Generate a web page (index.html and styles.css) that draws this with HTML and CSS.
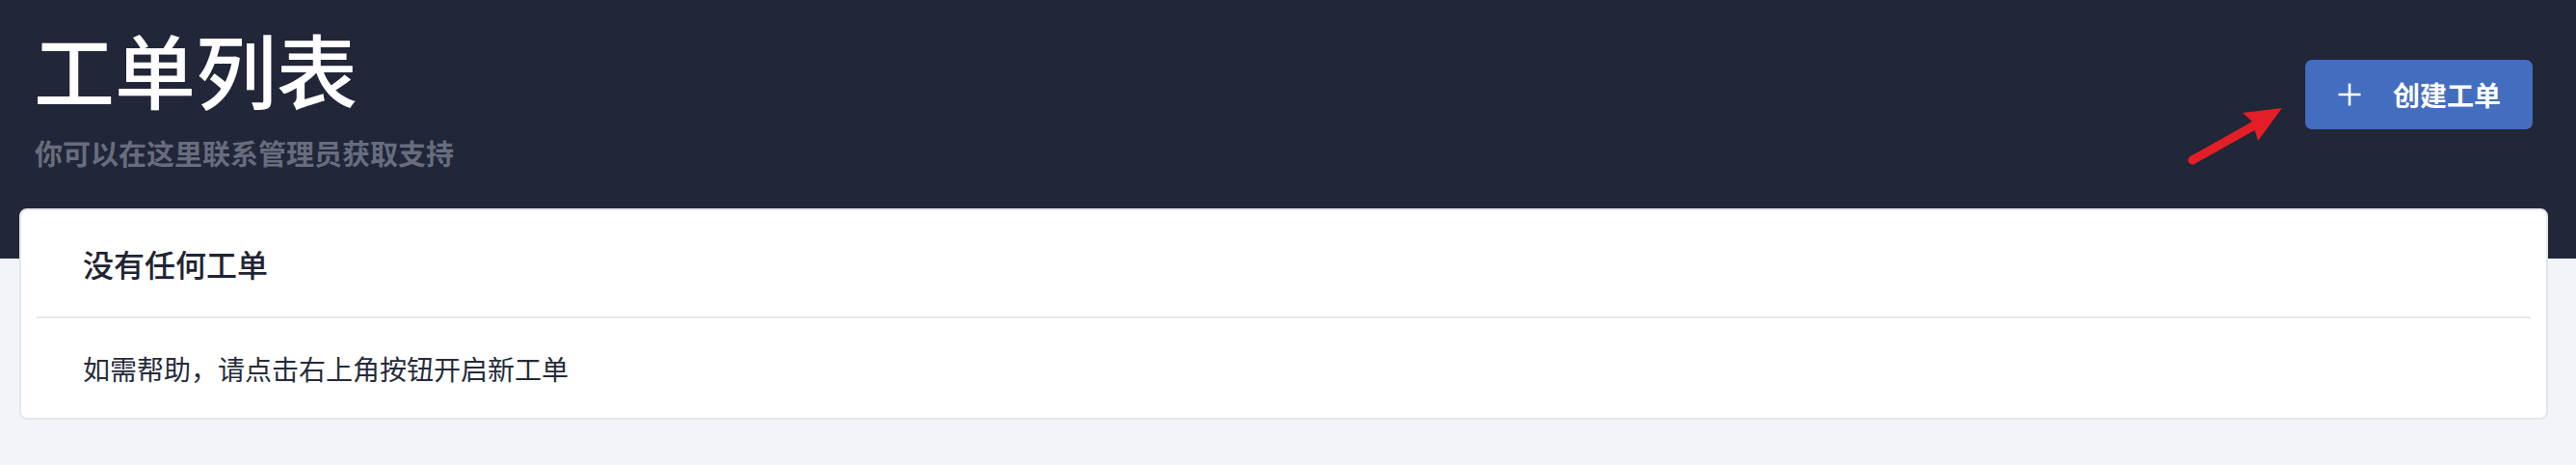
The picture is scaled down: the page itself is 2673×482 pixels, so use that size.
FILE: index.html
```html
<!DOCTYPE html>
<html lang="zh-CN">
<head>
<meta charset="utf-8">
<title>工单列表</title>
<link rel="stylesheet" href="styles.css">
</head>
<body>
<header class="page-header">
  <div class="heading">
    <h1 class="title">工单列表</h1>
    <p class="subtitle">你可以在这里联系管理员获取支持</p>
  </div>
  <button class="btn-create" type="button">
    <svg class="btn-icon" viewBox="0 0 24 24" width="24" height="24" aria-hidden="true">
      <path d="M12 0.5V23.5M0.5 12H23.5" stroke="#ffffff" stroke-width="2.6" fill="none"/>
    </svg>
    <span>创建工单</span>
  </button>
  <svg class="annotation-arrow" viewBox="0 0 110 70" width="110" height="70" aria-hidden="true">
    <line x1="10" y1="61" x2="76" y2="24" stroke="#e41e26" stroke-width="9" stroke-linecap="round"/>
    <polygon points="103,7 62,12 72,21 78,41" fill="#e41e26"/>
  </svg>
</header>
<main class="content">
  <section class="card">
    <div class="card-head">
      <h2 class="card-title">没有任何工单</h2>
    </div>
    <div class="card-body">
      <p class="card-text">如需帮助，请点击右上角按钮开启新工单</p>
    </div>
  </section>
</main>
</body>
</html>
```
FILE: styles.css
```css
* {
  box-sizing: border-box;
}

html, body {
  margin: 0;
  padding: 0;
}

body {
  background: #f1f4f8;
  font-family: "Noto Sans CJK SC", "Noto Sans", sans-serif;
  width: 2673px;
  height: 482px;
  overflow: hidden;
}

.page-header {
  position: relative;
  background: #212639;
  height: 268px;
  display: flex;
  justify-content: space-between;
  align-items: flex-start;
  padding: 29px 45px 0 35px;
}

.heading {
  display: flex;
  flex-direction: column;
}

.title {
  margin: 0;
  font-size: 84px;
  line-height: 1;
  font-weight: 500;
  color: #ffffff;
}

.subtitle {
  margin: 31px 0 0 1px;
  font-size: 29px;
  line-height: 1;
  font-weight: 700;
  color: #686d7d;
}

.btn-create {
  margin-top: 33px;
  width: 236px;
  height: 72px;
  border: none;
  border-radius: 7px;
  background: #436dbf;
  color: #ffffff;
  display: flex;
  align-items: center;
  padding: 0 0 0 34px;
  gap: 33px;
  font-family: "Noto Sans CJK SC", "Noto Sans", sans-serif;
  font-size: 28px;
  font-weight: 600;
  line-height: 1;
}

.btn-icon {
  flex: none;
  display: block;
}

.annotation-arrow {
  position: absolute;
  left: 2265px;
  top: 105px;
}

.content {
  position: relative;
  z-index: 1;
  margin: -52px 29px 0 20px;
}

.card {
  background: #ffffff;
  border: 2px solid #e3e6eb;
  border-radius: 8px;
  padding: 0 16px;
}

.card-head {
  height: 112px;
  display: flex;
  align-items: center;
  padding-left: 48px;
  border-bottom: 2px solid #e5e7eb;
}

.card-title {
  margin: 0;
  font-size: 32px;
  line-height: 1;
  font-weight: 500;
  color: #1e2433;
}

.card-body {
  height: 103px;
  display: flex;
  align-items: center;
  padding-left: 48px;
}

.card-text {
  margin: 0;
  font-size: 28px;
  line-height: 1;
  font-weight: 400;
  color: #252b3b;
}
```
